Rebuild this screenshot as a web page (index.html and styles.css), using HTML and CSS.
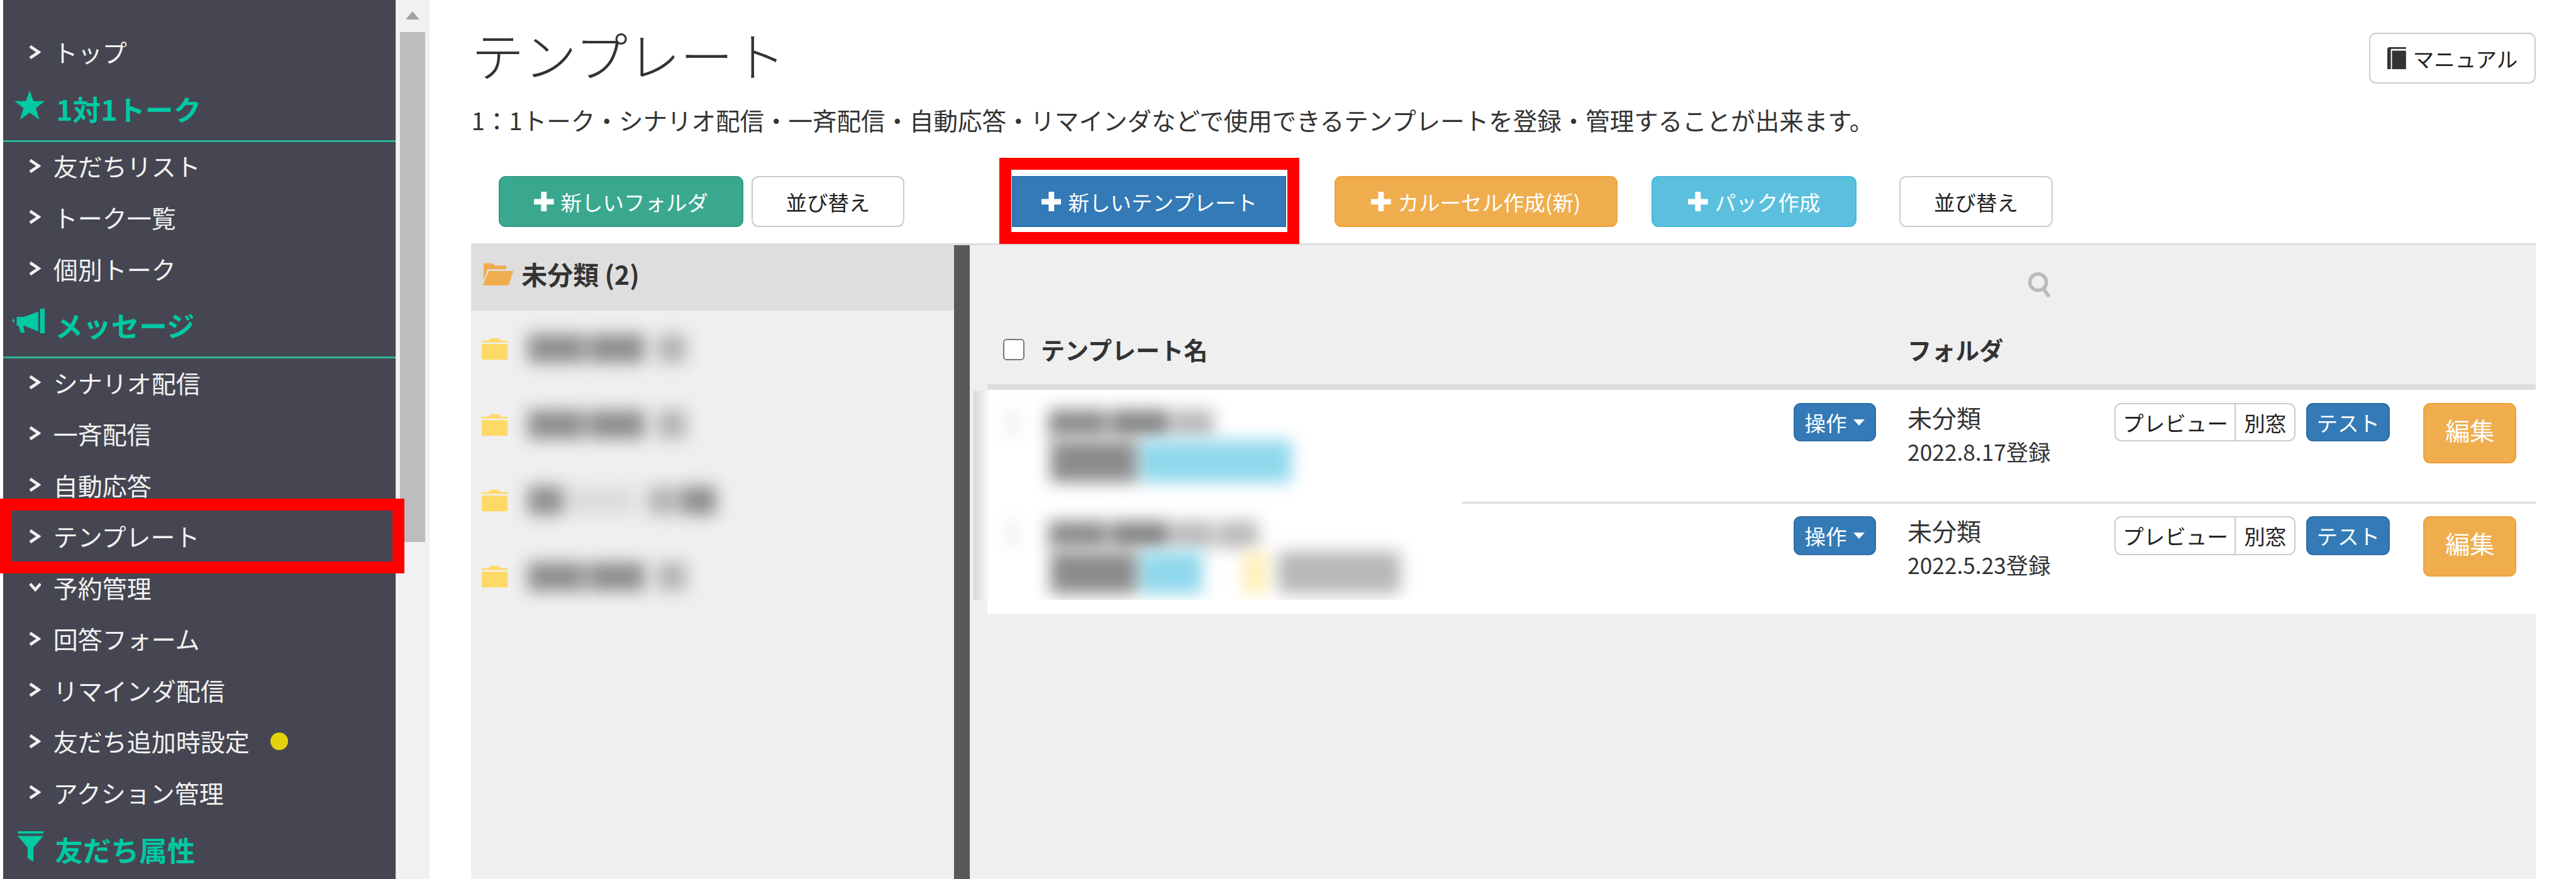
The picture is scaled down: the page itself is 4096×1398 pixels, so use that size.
FILE: index.html
```html
<!DOCTYPE html>
<html lang="ja">
<head>
    <meta charset="UTF-8">
    <title>テンプレート</title>
    <link rel="stylesheet" href="styles.css">
</head>
<body>
    <nav class="sidebar">
        <ul class="menu">
            <li class="item"><svg class="chev" viewBox="0 0 22 26"><path d="M3 3l15 10L3 23"/></svg>トップ</li>
            <li class="head"><svg class="ico-star" viewBox="0 0 52 50"><path d="M26 0l6.500 18H52L36.500 30l6 20L26 38 9.500 50l6-20L0 18h19.500z"/></svg>1対1トーク</li>
            <li class="item"><svg class="chev" viewBox="0 0 22 26"><path d="M3 3l15 10L3 23"/></svg>友だちリスト</li>
            <li class="item"><svg class="chev" viewBox="0 0 22 26"><path d="M3 3l15 10L3 23"/></svg>トーク一覧</li>
            <li class="item"><svg class="chev" viewBox="0 0 22 26"><path d="M3 3l15 10L3 23"/></svg>個別トーク</li>
            <li class="head"><svg class="ico-horn" viewBox="0 0 56 44"><path d="M0 18h3v5H0zM7 14h12L44 5v34L20 29h-2l3 12h-7l-4-12H7zM47 0h8v42h-8z"/></svg>メッセージ</li>
            <li class="item"><svg class="chev" viewBox="0 0 22 26"><path d="M3 3l15 10L3 23"/></svg>シナリオ配信</li>
            <li class="item"><svg class="chev" viewBox="0 0 22 26"><path d="M3 3l15 10L3 23"/></svg>一斉配信</li>
            <li class="item"><svg class="chev" viewBox="0 0 22 26"><path d="M3 3l15 10L3 23"/></svg>自動応答</li>
            <li class="item marked"><svg class="chev" viewBox="0 0 22 26"><path d="M3 3l15 10L3 23"/></svg>テンプレート</li>
            <li class="item"><svg class="chev" viewBox="0 0 22 26"><path d="M3 7l9 10 9-10"/></svg>予約管理</li>
            <li class="item"><svg class="chev" viewBox="0 0 22 26"><path d="M3 3l15 10L3 23"/></svg>回答フォーム</li>
            <li class="item"><svg class="chev" viewBox="0 0 22 26"><path d="M3 3l15 10L3 23"/></svg>リマインダ配信</li>
            <li class="item"><svg class="chev" viewBox="0 0 22 26"><path d="M3 3l15 10L3 23"/></svg>友だち追加時設定<span class="dot"></span></li>
            <li class="item"><svg class="chev" viewBox="0 0 22 26"><path d="M3 3l15 10L3 23"/></svg>アクション管理</li>
            <li class="head"><svg class="ico-filter" viewBox="0 0 44 52"><path d="M0 0h44v4H0zM0 8h44L27 28v24l-10-6V28z"/></svg>友だち属性</li>
        </ul>
    </nav>
    <div class="scrollbar">
        <span class="scroll-up"></span>
        <span class="scroll-thumb"></span>
    </div>

    <main class="main">
        <header class="top">
            <h1>テンプレート</h1>
            <a class="btn btn-default btn-manual"><svg class="ico-book" viewBox="0 0 34 38"><path d="M0 4q0-4 4-4h28v3H6v35H0z"/><path d="M8 6h24v32H8z"/></svg>マニュアル</a>
        </header>
        <p class="desc">1：1トーク・シナリオ配信・一斉配信・自動応答・リマインダなどで使用できるテンプレートを登録・管理することが出来ます。</p>

        <div class="toolbar">
            <a class="btn btn-green w-folder"><svg class="plus" viewBox="0 0 36 36"><path d="M13 0h10v13h13v10H23v13H13V23H0V13h13z"/></svg>新しいフォルダ</a>
            <a class="btn btn-default w-sort">並び替え</a>
            <a class="btn btn-blue w-new marked"><svg class="plus" viewBox="0 0 36 36"><path d="M13 0h10v13h13v10H23v13H13V23H0V13h13z"/></svg>新しいテンプレート</a>
            <a class="btn btn-orange w-carousel"><svg class="plus" viewBox="0 0 36 36"><path d="M13 0h10v13h13v10H23v13H13V23H0V13h13z"/></svg>カルーセル作成(新)</a>
            <a class="btn btn-cyan w-pack"><svg class="plus" viewBox="0 0 36 36"><path d="M13 0h10v13h13v10H23v13H13V23H0V13h13z"/></svg>パック作成</a>
            <a class="btn btn-default w-sort2">並び替え</a>
        </div>

        <section class="panel">
            <aside class="folders">
                <div class="folder-current">
                    <svg class="ico-open" viewBox="0 0 54 40"><path d="M3 2h16l3 4h20v6H10L3 32z"/><path d="M12 15h42l-8 25H2z"/></svg>
                    未分類 (2)
                </div>
                <div class="folder">
                    <svg class="ico-folder" viewBox="0 0 44 38"><path d="M0 5h12l3-4h14l3 4h12v3H0zM0 11h44v27H0z"/></svg>
                    <div class="fuzz"><span class="s1"></span><span class="s1"></span><span class="s3"></span></div>
                </div>
                <div class="folder">
                    <svg class="ico-folder" viewBox="0 0 44 38"><path d="M0 5h12l3-4h14l3 4h12v3H0zM0 11h44v27H0z"/></svg>
                    <div class="fuzz"><span class="s1"></span><span class="s1"></span><span class="s3"></span></div>
                </div>
                <div class="folder">
                    <svg class="ico-folder" viewBox="0 0 44 38"><path d="M0 5h12l3-4h14l3 4h12v3H0zM0 11h44v27H0z"/></svg>
                    <div class="fuzz"><span class="s1 short"></span><span class="s4"></span><span class="s3"></span><span class="s1 short"></span></div>
                </div>
                <div class="folder">
                    <svg class="ico-folder" viewBox="0 0 44 38"><path d="M0 5h12l3-4h14l3 4h12v3H0zM0 11h44v27H0z"/></svg>
                    <div class="fuzz"><span class="s1"></span><span class="s1"></span><span class="s3"></span></div>
                </div>
            </aside>
            <div class="divider"></div>
            <div class="list">
                <div class="search-line">
                    <svg class="ico-search" viewBox="0 0 44 44"><circle cx="19" cy="18" r="14"/><path d="M28 29l10 14"/></svg>
                </div>
                <div class="list-head">
                    <div class="col-name"><input type="checkbox" class="check">テンプレート名</div>
                    <div>フォルダ</div>
                </div>
                <div class="rows">
                    <div class="row">
                        <div class="col-name col-ops"><a class="btn btn-blue btn-ops">操作<span class="caret"></span></a></div>
                        <div class="col-folder">
                            <div class="f-name">未分類</div>
                            <div class="f-date">2022.8.17登録</div>
                        </div>
                        <div class="group">
                            <a class="btn btn-default g-preview">プレビュー</a><a class="btn btn-default g-window">別窓</a>
                        </div>
                        <a class="btn btn-blue btn-test">テスト</a>
                        <a class="btn btn-orange btn-edit">編集</a>
                    </div>
                    <div class="row">
                        <div class="col-name col-ops"><a class="btn btn-blue btn-ops">操作<span class="caret"></span></a></div>
                        <div class="col-folder">
                            <div class="f-name">未分類</div>
                            <div class="f-date">2022.5.23登録</div>
                        </div>
                        <div class="group">
                            <a class="btn btn-default g-preview">プレビュー</a><a class="btn btn-default g-window">別窓</a>
                        </div>
                        <a class="btn btn-blue btn-test">テスト</a>
                        <a class="btn btn-orange btn-edit">編集</a>
                    </div>
                    <div class="masked">
                        <div class="blur-line first"><span class="b-check"></span><span class="b-a"></span><span class="b-b"></span><span class="b-c"></span></div>
                        <div class="blur-line tags"><span class="b-tag"></span><span class="b-cyan wide"></span></div>
                        <div class="blur-line second"><span class="b-check"></span><span class="b-a"></span><span class="b-b"></span><span class="b-c"></span><span class="b-c"></span></div>
                        <div class="blur-line tags"><span class="b-tag"></span><span class="b-cyan"></span><span class="b-yellow"></span><span class="b-grey"></span></div>
                    </div>
                </div>
            </div>
        </section>
    </main>
</body>
</html>
```

FILE: styles.css
```css
*,
*::after,
*::before{
    padding: 0;
    margin: 0;
    box-sizing: border-box;
}
html{
    background: #fff;
}
body{
    width: 4096px;
    height: 1398px;
    overflow: hidden;
    display: flex;
    padding-left: 4.65px;
    font: normal 39px/1.4 "Noto Sans CJK JP", "Noto Sans", sans-serif;
    color: #333;
}

/* sidebar */
.sidebar{
    width: 624px;
    flex: none;
    background: #454651;
    position: relative;
    z-index: 2;
}
.menu{
    list-style: none;
    padding-top: 44.6px;
}
.item{
    height: 76.25px;
    margin-bottom: 5.3px;
    display: flex;
    align-items: center;
    color: #f2f2f2;
    position: relative;
}
.chev{
    width: 20.5px;
    height: 24px;
    margin: 0 19.5px 0 40px;
    fill: none;
    stroke: #f2f2f2;
    stroke-width: 5;
}
.head{
    height: 99.5px;
    line-height: 93px;
    border-bottom: 3px solid #2db596;
    color: #00c9a4;
    font-size: 44.6px;
    font-weight: 700;
    display: flex;
    align-items: flex-start;
}
.head svg{
    fill: #00c9a4;
    align-self: flex-start;
}
.ico-star{
    width: 48.4px;
    height: 46.5px;
    margin: 17.7px 17.7px 0 18.6px;
}
.ico-horn{
    width: 52px;
    height: 41px;
    margin: 20.5px 15px 0 15.8px;
}
.ico-filter{
    width: 41px;
    height: 48.4px;
    margin: 18.6px 18.6px 0 23.2px;
}
.dot{
    width: 28px;
    height: 28px;
    border-radius: 50%;
    background: #e6d20a;
    margin-left: 33.5px;
}
.marked::after{
    content: "";
    position: absolute;
    border: 19.5px solid #f00;
}
.item.marked::after{
    top: -21.4px;
    bottom: -21.4px;
    left: -4.65px;
    right: -14px;
}

.scrollbar{
    width: 54px;
    height: 100%;
    flex: none;
    background: #f1f1f1;
    padding: 17.7px 6.5px 0;
    border-left: 1px solid #ddd;
}
.scroll-up{
    display: block;
    width: 0;
    margin: 0 auto 20.5px;
    border: 11px solid transparent;
    border-top: 0;
    border-bottom: 13px solid #a3a3a3;
}
.scroll-thumb{
    display: block;
    height: 811px;
    background: #bdbdbd;
}

/* main */
.main{
    flex: 1;
    padding: 0 64px 0 66.8px;
    min-width: 0;
}
.top{
    display: flex;
    justify-content: space-between;
    align-items: flex-start;
    height: 167.4px;
}
h1{
    font-size: 83.7px;
    font-weight: 300;
    line-height: 83.7px;
    margin-top: 43.7px;
    color: #333;
}
.desc{
    font-size: 38.5px;
    line-height: 46.5px;
    height: 46.5px;
    color: #333;
    white-space: nowrap;
}
.toolbar{
    display: flex;
    height: 81px;
    margin-top: 66px;
    padding-left: 43.7px;
}
.btn{
    display: flex;
    align-items: center;
    justify-content: center;
    border: 2.8px solid;
    border-radius: 11px;
    font-size: 33.5px;
    line-height: 1;
    white-space: nowrap;
    position: relative;
}
.btn-default{
    background: #fff;
    border-color: #ccc;
    color: #222;
}
.btn-green{
    background: #3aa88f;
    border-color: #319a82;
    color: #fff;
}
.btn-blue{
    background: #337ab7;
    border-color: #2e6da4;
    color: #fff;
}
.btn-orange{
    background: #f0ad4e;
    border-color: #eea236;
    color: #fff;
}
.btn-cyan{
    background: #5bc0de;
    border-color: #46b8da;
    color: #fff;
}
.plus{
    width: 31.6px;
    height: 31.6px;
    fill: #fff;
    margin-right: 11px;
}
.w-folder{ width: 388.7px; }
.w-sort{ width: 243.6px; margin-left: 13px; }
.w-new{ width: 436px; margin-left: 171px; border-radius: 0; }
.w-carousel{ width: 450px; margin-left: 76.2px; }
.w-pack{ width: 325.4px; margin-left: 54.9px; }
.w-sort2{ width: 244.5px; margin-left: 67.9px; }
.btn.marked::after{
    top: -30.7px;
    bottom: -28.8px;
    left: -22.3px;
    right: -22.3px;
}
.btn-manual{
    width: 265px;
    height: 81px;
    margin-top: 52px;
}
.ico-book{
    width: 31.6px;
    height: 35.3px;
    fill: #333;
    margin-right: 9.3px;
}

/* panel */
.panel{
    display: flex;
    height: 1011px;
    margin-top: 26px;
    border-top: 3px solid #ddd;
    background: #efefef;
}
.folders{
    width: 768px;
    flex: none;
}
.folder-current{
    height: 104px;
    background: #dedede;
    display: flex;
    align-items: center;
    padding: 0 0 13px 16.7px;
    font-size: 41px;
    font-weight: 700;
    color: #333;
}
.ico-open{
    width: 50.2px;
    height: 37.2px;
    fill: #f0ad4e;
    margin-right: 13px;
}
.folder{
    height: 120.9px;
    display: flex;
    align-items: center;
    padding-left: 16.7px;
}
.ico-folder{
    width: 41px;
    height: 35.3px;
    fill: #ffd966;
    margin-right: 22.3px;
}
.fuzz{
    display: flex;
    height: 46px;
    margin-left: 9.3px;
    gap: 6px;
    filter: blur(13px);
}
.fuzz span{
    display: block;
    height: 100%;
}
.s1{ width: 90px; background: #8f8f8f; }
.s1.short{ width: 56px; }
.s3{ width: 46px; margin-left: 14px; background: #b4b4b4; }
.s4{ width: 110px; background: #dcdcdc; }
.divider{
    width: 24.2px;
    flex: none;
    background: #585858;
}
.list{
    flex: 1;
    padding-left: 28.8px;
    min-width: 0;
}
.search-line{
    height: 118px;
    padding: 41.8px 0 0 1652.4px;
}
.ico-search{
    width: 41px;
    height: 41px;
    fill: none;
    stroke: #bbb;
    stroke-width: 6;
    display: block;
}
.list-head{
    display: flex;
    align-items: center;
    height: 112.5px;
    font-size: 38.1px;
    font-weight: 700;
    color: #333;
    border-bottom: 9.3px solid #ddd;
    padding-bottom: 7.4px;
}
.col-name{
    width: 1462.7px;
    flex: none;
    display: flex;
    align-items: center;
}
.check{
    appearance: none;
    width: 33.5px;
    height: 33.5px;
    margin: 0 26px 0 25px;
    border: 2.8px solid #767676;
    border-radius: 5.6px;
    background: #fff;
}
.rows{
    position: relative;
    background: #fff;
}
.row{
    display: flex;
    align-items: flex-start;
    height: 180.4px;
    padding-top: 20.5px;
    border-bottom: 3px solid #ddd;
}
.row + .row{
    height: 174.8px;
    border-bottom: 0;
}
.col-ops{
    justify-content: flex-end;
    padding-right: 50.2px;
}
.btn-ops{
    width: 131px;
    height: 61.4px;
}
.caret{
    margin-left: 11px;
    border: 9.3px solid transparent;
    border-top: 10.2px solid #fff;
    border-bottom: 0;
}
.col-folder{
    width: 329.2px;
    flex: none;
}
.f-name{
    line-height: 44px;
}
.f-date{
    font-size: 35.3px;
    line-height: 46.5px;
    margin-top: 10.2px;
}
.group{
    display: flex;
    width: 291px;
    height: 61.4px;
}
.g-preview{
    width: 193.4px;
    border-radius: 11px 0 0 11px;
}
.g-window{
    width: 97.6px;
    margin-left: -2.8px;
    border-radius: 0 11px 11px 0;
}
.btn-test{
    width: 133px;
    height: 61.4px;
    margin-left: 14px;
}
.btn-edit{
    width: 147.8px;
    height: 95.8px;
    margin-left: 53px;
    font-size: 39px;
    padding-bottom: 11px;
}

/* pixelated part of the screenshot, lies over the name column */
.masked{
    position: absolute;
    top: 1.9px;
    left: -22.3px;
    width: 776.4px;
    height: 332px;
    overflow: hidden;
    padding-top: 28.8px;
    background: linear-gradient(90deg, #d8d8d8, #fff 28px);
}
.blur-line{
    display: flex;
    filter: blur(13px);
}
.blur-line span{
    display: block;
    height: 100%;
}
.blur-line.first,
.blur-line.second{
    height: 44px;
    gap: 6px;
}
.blur-line.second{
    margin-top: 61.4px;
}
.blur-line.tags{
    height: 67px;
    margin-top: 5px;
    padding-left: 121.8px;
    gap: 5.6px;
}
.b-check{
    width: 15px;
    margin-left: 55.8px;
    margin-right: 41.8px;
    background: #e8e8e8;
}
.b-a{ width: 93px; background: #8e8e8e; }
.b-b{ width: 93px; background: #888; }
.b-c{ width: 65px; background: #bbb; }
.b-tag{ width: 138.5px; background: #8c8c8c; }
.b-cyan{ width: 97.6px; background: #8fd8ec; }
.b-cyan.wide{ width: 240px; }
.b-yellow{ width: 37px; margin-left: 59.5px; background: #fdefb5; }
.b-grey{ width: 195px; margin-left: 13px; background: #b8b8b8; }
```
